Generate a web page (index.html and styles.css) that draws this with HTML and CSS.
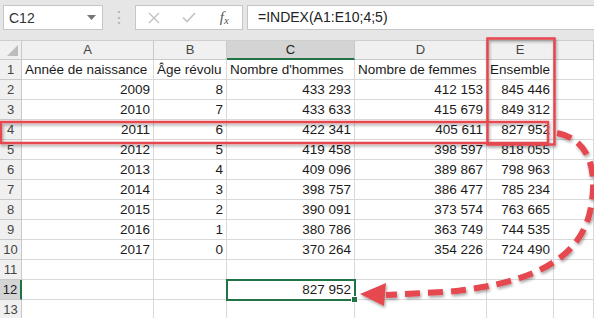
FILE: index.html
```html
<!DOCTYPE html>
<html lang="fr">
<head>
    <meta charset="UTF-8">
    <title>INDEX - Excel</title>
    <link rel="stylesheet" href="styles.css">
</head>
<body>
    <div class="toolbar">
        <div class="namebox">
            <span>C12</span>
            <svg class="drop" width="9" height="5" viewBox="0 0 9 5"><polygon points="0,0 9,0 4.5,5" fill="#767676"/></svg>
        </div>
        <div class="sep">&#8942;</div>
        <div class="fxbox">
            <div class="fxbtn">
                <svg width="12" height="12" viewBox="0 0 12 12"><path d="M1 1 L11 11 M11 1 L1 11" stroke="#c2c2c2" stroke-width="1.4" fill="none"/></svg>
            </div>
            <div class="fxbtn">
                <svg width="14" height="11" viewBox="0 0 14 11"><path d="M1 5.5 L5 9.5 L13 1" stroke="#c2c2c2" stroke-width="1.6" fill="none"/></svg>
            </div>
            <div class="fxbtn fx"><i>f</i><span class="fx-x">x</span></div>
        </div>
        <div class="formula">=INDEX(A1:E10;4;5)</div>
    </div>

    <div class="sheet">
        <div class="hd corner"></div>
        <div class="hd">A</div>
        <div class="hd">B</div>
        <div class="hd hd-sel">C</div>
        <div class="hd">D</div>
        <div class="hd">E</div>
        <div class="hd"></div>

        <div class="rh">1</div>
        <div class="cell">Année de naissance</div>
        <div class="cell">Âge révolu</div>
        <div class="cell">Nombre d'hommes</div>
        <div class="cell">Nombre de femmes</div>
        <div class="cell">Ensemble</div>
        <div class="cell"></div>

        <div class="rh">2</div>
        <div class="cell num">2009</div>
        <div class="cell num">8</div>
        <div class="cell num">433&nbsp;293</div>
        <div class="cell num">412&nbsp;153</div>
        <div class="cell num">845&nbsp;446</div>
        <div class="cell"></div>

        <div class="rh">3</div>
        <div class="cell num">2010</div>
        <div class="cell num">7</div>
        <div class="cell num">433&nbsp;633</div>
        <div class="cell num">415&nbsp;679</div>
        <div class="cell num">849&nbsp;312</div>
        <div class="cell"></div>

        <div class="rh">4</div>
        <div class="cell num">2011</div>
        <div class="cell num">6</div>
        <div class="cell num">422&nbsp;341</div>
        <div class="cell num">405&nbsp;611</div>
        <div class="cell num">827&nbsp;952</div>
        <div class="cell"></div>

        <div class="rh">5</div>
        <div class="cell num">2012</div>
        <div class="cell num">5</div>
        <div class="cell num">419&nbsp;458</div>
        <div class="cell num">398&nbsp;597</div>
        <div class="cell num">818&nbsp;055</div>
        <div class="cell"></div>

        <div class="rh">6</div>
        <div class="cell num">2013</div>
        <div class="cell num">4</div>
        <div class="cell num">409&nbsp;096</div>
        <div class="cell num">389&nbsp;867</div>
        <div class="cell num">798&nbsp;963</div>
        <div class="cell"></div>

        <div class="rh">7</div>
        <div class="cell num">2014</div>
        <div class="cell num">3</div>
        <div class="cell num">398&nbsp;757</div>
        <div class="cell num">386&nbsp;477</div>
        <div class="cell num">785&nbsp;234</div>
        <div class="cell"></div>

        <div class="rh">8</div>
        <div class="cell num">2015</div>
        <div class="cell num">2</div>
        <div class="cell num">390&nbsp;091</div>
        <div class="cell num">373&nbsp;574</div>
        <div class="cell num">763&nbsp;665</div>
        <div class="cell"></div>

        <div class="rh">9</div>
        <div class="cell num">2016</div>
        <div class="cell num">1</div>
        <div class="cell num">380&nbsp;786</div>
        <div class="cell num">363&nbsp;749</div>
        <div class="cell num">744&nbsp;535</div>
        <div class="cell"></div>

        <div class="rh">10</div>
        <div class="cell num">2017</div>
        <div class="cell num">0</div>
        <div class="cell num">370&nbsp;264</div>
        <div class="cell num">354&nbsp;226</div>
        <div class="cell num">724&nbsp;490</div>
        <div class="cell"></div>

        <div class="rh">11</div>
        <div class="cell"></div>
        <div class="cell"></div>
        <div class="cell"></div>
        <div class="cell"></div>
        <div class="cell"></div>
        <div class="cell"></div>

        <div class="rh rh-sel">12</div>
        <div class="cell"></div>
        <div class="cell"></div>
        <div class="cell num sel">827&nbsp;952</div>
        <div class="cell"></div>
        <div class="cell"></div>
        <div class="cell"></div>

        <div class="rh">13</div>
        <div class="cell"></div>
        <div class="cell"></div>
        <div class="cell"></div>
        <div class="cell"></div>
        <div class="cell"></div>
        <div class="cell"></div>
    </div>

    <!-- red annotations drawn over the sheet -->
    <svg class="marks" width="594" height="318" viewBox="0 0 594 318">
        <defs>
            <filter id="shadow" x="-10%" y="-10%" width="120%" height="130%">
                <feDropShadow dx="1" dy="2" stdDeviation="1.5" flood-color="#000" flood-opacity="0.35"/>
            </filter>
        </defs>
        <g filter="url(#shadow)" fill="none" stroke="#e5484f">
            <rect x="487.5" y="38.5" width="67" height="106" stroke-width="2.5"/>
            <rect x="1" y="122" width="547" height="21" stroke-width="2.5"/>
            <path d="M557 133 C588 139 598 168 591 207 C583 252 545 283 445 292 L386 295" stroke-width="6" stroke-dasharray="15 8"/>
            <polygon points="360,294 386,283 384,306" fill="#e5484f" stroke="none"/>
        </g>
    </svg>
</body>
</html>
```

FILE: styles.css
```css
body {
    margin: 0;
    width: 594px;
    height: 318px;
    overflow: hidden;
    position: relative;
    background: #fff;
    font-family: "Liberation Sans", Arial, sans-serif;
    color: #1b1b1b;
}

.toolbar {
    display: flex;
    align-items: flex-start;
    height: 41px;
    box-sizing: border-box;
    padding: 5px 0 0 3px;
    background: #e6e6e6;
    border-bottom: 1px solid #cfcfcf;
}
.namebox {
    width: 100px;
    height: 25px;
    box-sizing: border-box;
    background: #fff;
    border: 1px solid #c6c6c6;
    display: flex;
    align-items: center;
    justify-content: space-between;
    padding: 0 6px 0 5px;
    font-size: 14px;
    color: #333;
}
.sep {
    width: 32px;
    height: 25px;
    display: flex;
    align-items: center;
    justify-content: center;
    color: #b0b0b0;
    font-size: 16px;
}
.fxbox {
    width: 108px;
    height: 25px;
    box-sizing: border-box;
    background: #fff;
    border: 1px solid #c6c6c6;
    display: flex;
}
.fxbtn {
    width: 36px;
    display: flex;
    align-items: center;
    justify-content: center;
}
.fx {
    font-family: "Liberation Serif", serif;
    font-size: 15px;
    color: #555;
}
.fx-x {
    font-style: italic;
    font-size: 11px;
    margin-top: 4px;
}
.formula {
    margin-left: 4px;
    flex: 1;
    height: 25px;
    box-sizing: border-box;
    background: #fff;
    border: 1px solid #c6c6c6;
    border-right: none;
    padding-left: 10px;
    line-height: 23px;
    font-size: 14px;
    color: #222;
}

.sheet {
    display: grid;
    grid-template-columns: 22px 132px 73px 128px 132px 67px 40px;
    grid-template-rows: 19px repeat(13, 20px);
}
.cell, .hd, .rh {
    box-sizing: border-box;
    border-right: 1px solid #d9d9d9;
    border-bottom: 1px solid #d9d9d9;
    white-space: nowrap;
    overflow: hidden;
}
.cell {
    padding: 0 3px;
    font-size: 13.5px;
    line-height: 20px;
}
.num {
    text-align: right;
}
.hd, .rh {
    background: #f0f0f0;
    border-color: #c9c9c9;
    color: #444;
    font-size: 13px;
    text-align: center;
}
.hd {
    line-height: 18px;
}
.rh {
    line-height: 20px;
}
.corner {
    position: relative;
}
.corner::after {
    content: "";
    position: absolute;
    right: 3px;
    bottom: 3px;
    width: 11px;
    height: 11px;
    background: #bdbdbd;
    clip-path: polygon(100% 0, 100% 100%, 0 100%);
}
.hd-sel {
    background: #d4d4d4;
    border-bottom: 2px solid #217346;
    color: #222;
}
.rh-sel {
    background: #d4d4d4;
    border-right: 2px solid #217346;
    color: #222;
}
.sel {
    position: relative;
    z-index: 1;
    outline: 2px solid #217346;
    outline-offset: -1px;
    overflow: visible;
}
.sel::after {
    content: "";
    position: absolute;
    right: -4px;
    bottom: -4px;
    width: 5px;
    height: 5px;
    background: #217346;
    border: 1px solid #fff;
}

.marks {
    position: absolute;
    left: 0;
    top: 0;
    pointer-events: none;
    z-index: 2;
}
```
